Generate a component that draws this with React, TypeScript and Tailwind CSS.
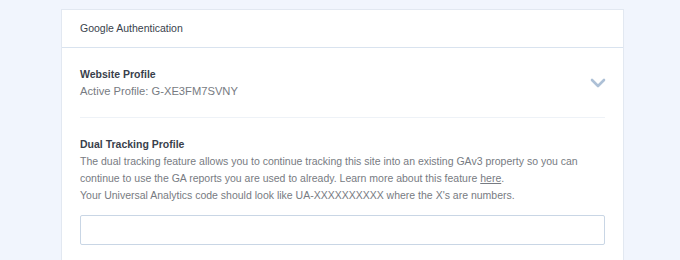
const font = { fontFamily: '"Liberation Sans", Arial, sans-serif' };

function Chevron() {
  return (
    <svg width="16" height="10" viewBox="0 0 16 10" className="mr-[-1px] text-[#adc0d6]">
      <polyline
        points="2,2 8,8 14,2"
        fill="none"
        stroke="currentColor"
        strokeWidth="2.6"
        strokeLinecap="round"
        strokeLinejoin="round"
      />
    </svg>
  );
}

export default function App() {
  return (
    <div
      className="h-[260px] w-[680px] overflow-hidden bg-[#f1f5fd] pl-[61px] pt-[9px]"
      style={font}
    >
      <div className="h-[260px] w-[563px] border border-[#e2e8f1] bg-white">
        <div className="flex h-[38px] items-center border-b border-[#d9e3ef] px-[18px] text-[10.5px] text-[#393f4c]">
          Google Authentication
        </div>
        <div className="px-[18px]">
          <div className="flex items-center justify-between border-b border-[#eef2f7] pb-[17px] pt-[18px]">
            <div>
              <div className="text-[10.5px] font-bold leading-[17px] text-[#393f4c]">
                Website Profile
              </div>
              <div className="text-[11.2px] leading-[17px] text-[#777b82]">
                Active Profile: G-XE3FM7SVNY
              </div>
            </div>
            <Chevron />
          </div>
          <div className="pt-[18px]">
            <div className="text-[10.5px] font-bold leading-[17px] text-[#393f4c]">
              Dual Tracking Profile
            </div>
            <p className="text-[10.5px] leading-[17px] text-[#777b82]">
              The dual tracking feature allows you to continue tracking this site
              into an existing GAv3 property so you can continue to use the GA
              reports you are used to already. Learn more about this feature{" "}
              <span className="whitespace-nowrap">
                <a href="#" className="underline">
                  here
                </a>
                .
              </span>
              <br />
              Your Universal Analytics code should look like UA-XXXXXXXXXX where
              the X's are numbers.
            </p>
            <input
              type="text"
              className="mt-[11px] h-[30px] w-full rounded-[2px] border border-[#c9d6e5] bg-white px-2 text-[11px] outline-none"
            />
          </div>
        </div>
      </div>
    </div>
  );
}
